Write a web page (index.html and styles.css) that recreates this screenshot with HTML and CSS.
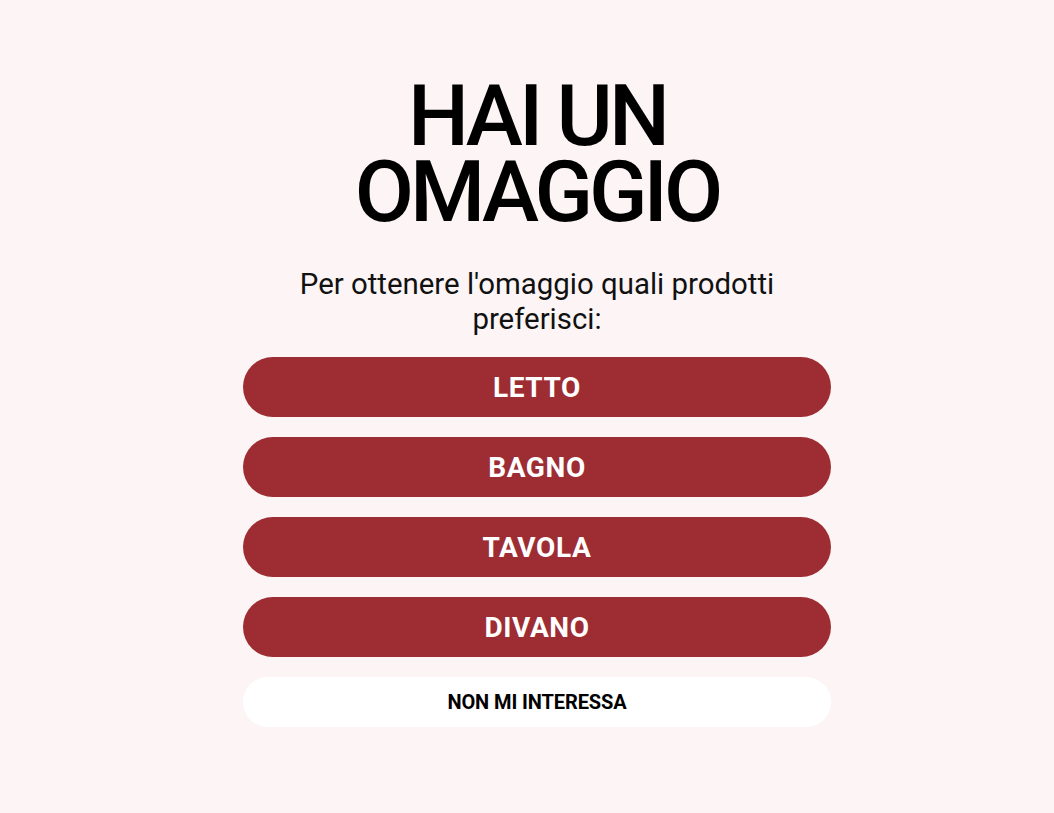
FILE: index.html
```html
<!DOCTYPE html>
<html lang="it">
<head>
  <meta charset="UTF-8" />
  <meta name="viewport" content="width=device-width, initial-scale=1.0"/>
  <title>Hai un omaggio</title>
  <link rel="stylesheet" href="styles.css">
</head>
<body>
  <div class="survey">
    <h1 class="title">HAI UN<br>OMAGGIO</h1>
    <p class="question">Per ottenere l'omaggio quali prodotti<br>preferisci:</p>
    <div class="choices">
      <button class="choice">LETTO</button>
      <button class="choice">BAGNO</button>
      <button class="choice">TAVOLA</button>
      <button class="choice">DIVANO</button>
      <button class="skip">NON MI INTERESSA</button>
    </div>
  </div>
</body>
</html>
```

FILE: styles.css
```css
body {
  margin: 0;
  padding: 0 0 0 20px;
  background: #fdf5f5;
  font-family: Roboto, 'Liberation Sans', sans-serif;
  display: flex;
  justify-content: center;
}

.survey {
  width: 588px;
  padding-top: 78px;
  text-align: center;
}

.title {
  margin: 0;
  font-size: 86px;
  font-weight: 500;
  line-height: 76px;
  letter-spacing: -4px;
  color: #000;
}

.question {
  margin: 37px 0 20px;
  font-size: 29.4px;
  font-weight: 400;
  line-height: 35px;
  color: #111;
}

.choices {
  display: flex;
  flex-direction: column;
  gap: 20px;
}

.choice {
  height: 60px;
  border: none;
  border-radius: 30px;
  background: #9e2d33;
  color: #fff;
  font-family: Roboto, sans-serif;
  font-size: 28px;
  font-weight: 700;
  letter-spacing: 0.6px;
  cursor: pointer;
}

.skip {
  height: 50px;
  border: none;
  border-radius: 25px;
  background: #fff;
  color: #000;
  font-family: Roboto, sans-serif;
  font-size: 20px;
  font-weight: 700;
  letter-spacing: -0.1px;
  cursor: pointer;
}
```
